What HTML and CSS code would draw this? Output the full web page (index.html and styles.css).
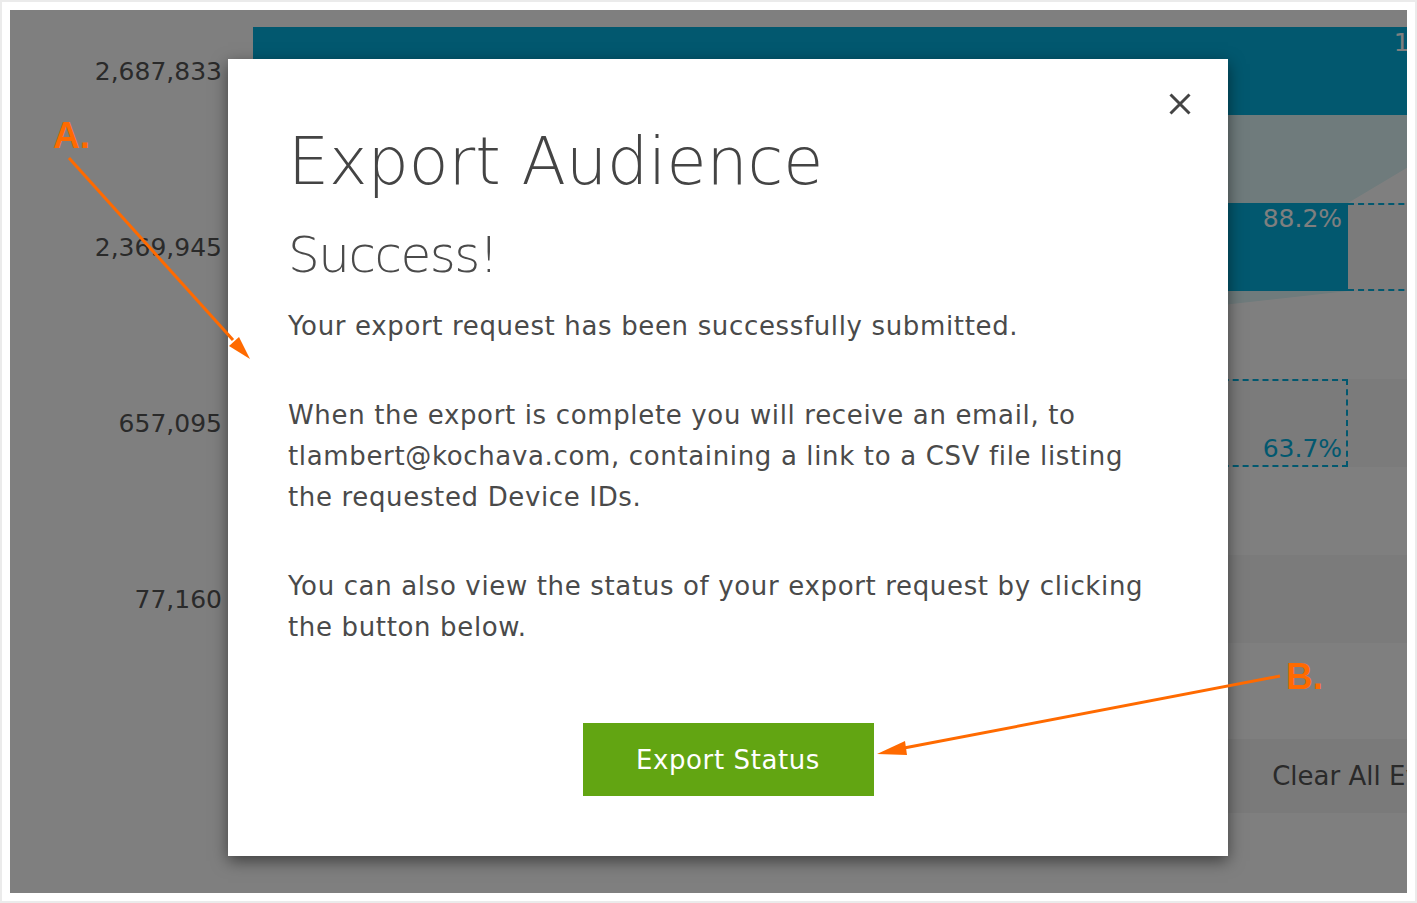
FILE: index.html
```html
<!doctype html>
<html>
    <head>
        <title>Export Audience</title>
        <meta charset="utf-8" />
        <meta name="viewport" content="width=device-width" />
        <link rel="stylesheet" href="styles.css">
    </head>
    <body>
        <div id="frame">
            <div id="screen">
                <section class="funnel">
                    <svg class="links" width="1242" height="616" viewBox="0 0 1242 616">
                        <polygon points="0,88 1242,88 1095,176 0,176" />
                        <polygon points="0,264 1095,264 304,352 0,352" />
                        <polygon points="0,440 304,440 36,528 0,528" />
                    </svg>
                    <div class="count">2,687,833</div>
                    <div class="track">
                        <div class="bar" style="width: 100%"><span>100.0%</span></div>
                    </div>
                    <div class="count">2,369,945</div>
                    <div class="track">
                        <div class="bar" style="width: 88.17%"><span>88.2%</span></div>
                        <div class="drop" style="width: 11.83%"><span>11.8%</span></div>
                    </div>
                    <div class="count">657,095</div>
                    <div class="track">
                        <div class="bar" style="width: 24.45%"></div>
                        <div class="drop" style="width: 63.72%"><span>63.7%</span></div>
                    </div>
                    <div class="count">77,160</div>
                    <div class="track">
                        <div class="bar" style="width: 2.87%"></div>
                        <div class="drop" style="width: 21.58%"></div>
                    </div>
                </section>
                <div class="actions">
                    <button class="plain">Clear All Events</button>
                </div>

                <div class="backdrop"></div>
                <div class="modal">
                    <button class="close" aria-label="Close">
                        <svg width="22" height="22" viewBox="0 0 22 22">
                            <path d="M1.5 1.5 L20.5 20.5 M20.5 1.5 L1.5 20.5" />
                        </svg>
                    </button>
                    <h1>Export Audience</h1>
                    <h2>Success!</h2>
                    <p>Your export request has been successfully submitted.</p>
                    <p>When the export is complete you will receive an email, to tlambert@kochava.com, containing a link to a CSV file listing the requested Device IDs.</p>
                    <p>You can also view the status of your export request by clicking the button below.</p>
                    <button class="go">Export Status</button>
                </div>
            </div>

            <svg class="notes" width="1417" height="903" viewBox="0 0 1417 903">
                <text x="51" y="146">A.</text>
                <line x1="67" y1="156" x2="231" y2="338" />
                <polygon points="248,357 227,344 237,335" />
                <text x="1284" y="687">B.</text>
                <line x1="1278" y1="674" x2="902" y2="746" />
                <polygon points="875,752 903,739 905,753" />
            </svg>
        </div>
    </body>
</html>
```

FILE: styles.css
```css
html {
    margin: 0px;
    padding: 0px;
}

body {
    font-family: "DejaVu Sans", "Open Sans", sans-serif;
    margin: 0px;
    padding: 0px;
    color: #555;
}

#frame {
    position: relative;
    width: 1417px;
    height: 903px;
    box-sizing: border-box;
    border: 2px solid #ebebeb;
    padding: 8px;
    background-color: white;
}

#screen {
    position: relative;
    width: 1397px;
    height: 883px;
    overflow: hidden;
    background-color: white;
}

.funnel {
    position: relative;
    display: grid;
    grid-template-columns: 212px 1242px;
    grid-auto-rows: 88px;
    column-gap: 31px;
    row-gap: 88px;
    padding-top: 17px;
}

.links {
    position: absolute;
    left: 243px;
    top: 17px;
}

.links polygon {
    fill: #def6f8;
}

.count {
    display: flex;
    align-items: center;
    justify-content: flex-end;
    font-size: 25px;
    color: #555;
}

.track {
    display: flex;
    background-color: #f6f6f6;
}

.bar {
    display: flex;
    justify-content: flex-end;
    align-items: flex-start;
    box-sizing: border-box;
    padding: 3px 6px;
    background-color: #04b0de;
    color: white;
    font-size: 25px;
    line-height: 26px;
}

.drop {
    display: flex;
    justify-content: flex-end;
    align-items: flex-end;
    box-sizing: border-box;
    padding: 0px 4px 3px 0px;
    border: 2px dashed #04b0de;
    border-left: none;
    color: #04b0de;
    font-size: 25px;
    line-height: 26px;
}

.actions {
    display: flex;
    justify-content: flex-end;
    width: 1242px;
    height: 74px;
    margin: 96px 0px 0px 243px;
    background-color: #f4f4f4;
}

.actions .plain {
    border: none;
    background: none;
    padding: 0px 18px;
    font-family: inherit;
    font-size: 26px;
    color: #555;
}

.backdrop {
    position: absolute;
    top: 0px;
    left: 0px;
    right: 0px;
    bottom: 0px;
    background-color: rgba(0, 0, 0, 0.5);
}

.modal {
    position: absolute;
    left: 218px;
    top: 49px;
    width: 1000px;
    height: 797px;
    box-sizing: border-box;
    padding: 64px 60px 60px 60px;
    display: flex;
    flex-direction: column;
    background-color: white;
    box-shadow: 0px 5px 15px rgba(0, 0, 0, 0.5);
    color: #4a4a4a;
}

.modal h1 {
    margin: 0px;
    font-size: 65px;
    line-height: 78px;
    font-weight: 200;
    color: #444;
}

.modal h2 {
    margin: 23px 0px 0px 0px;
    font-size: 50px;
    line-height: 62px;
    font-weight: 200;
    letter-spacing: -1.5px;
    color: #4a4a4a;
}

.modal p {
    max-width: 868px;
    margin: 20px 0px 0px 0px;
    font-size: 26px;
    line-height: 41px;
    letter-spacing: 0.65px;
}

.modal p + p {
    margin-top: 48px;
}

.close {
    position: absolute;
    top: 34px;
    right: 37px;
    width: 22px;
    height: 22px;
    padding: 0px;
    border: none;
    background: none;
}

.close svg {
    display: block;
}

.close path {
    stroke: #444;
    stroke-width: 3;
    fill: none;
}

.go {
    align-self: center;
    width: 291px;
    height: 74px;
    margin-top: 75px;
    border: none;
    background-color: #62a512;
    color: white;
    font-family: inherit;
    font-size: 26px;
    letter-spacing: 0.6px;
}

.notes {
    position: absolute;
    top: 0px;
    left: 0px;
    pointer-events: none;
}

.notes text {
    font-family: "Liberation Sans", sans-serif;
    font-weight: bold;
    font-size: 37px;
    fill: #ff6a00;
}

.notes line {
    stroke: #ff6a00;
    stroke-width: 3;
}

.notes polygon {
    fill: #ff6a00;
}
```
